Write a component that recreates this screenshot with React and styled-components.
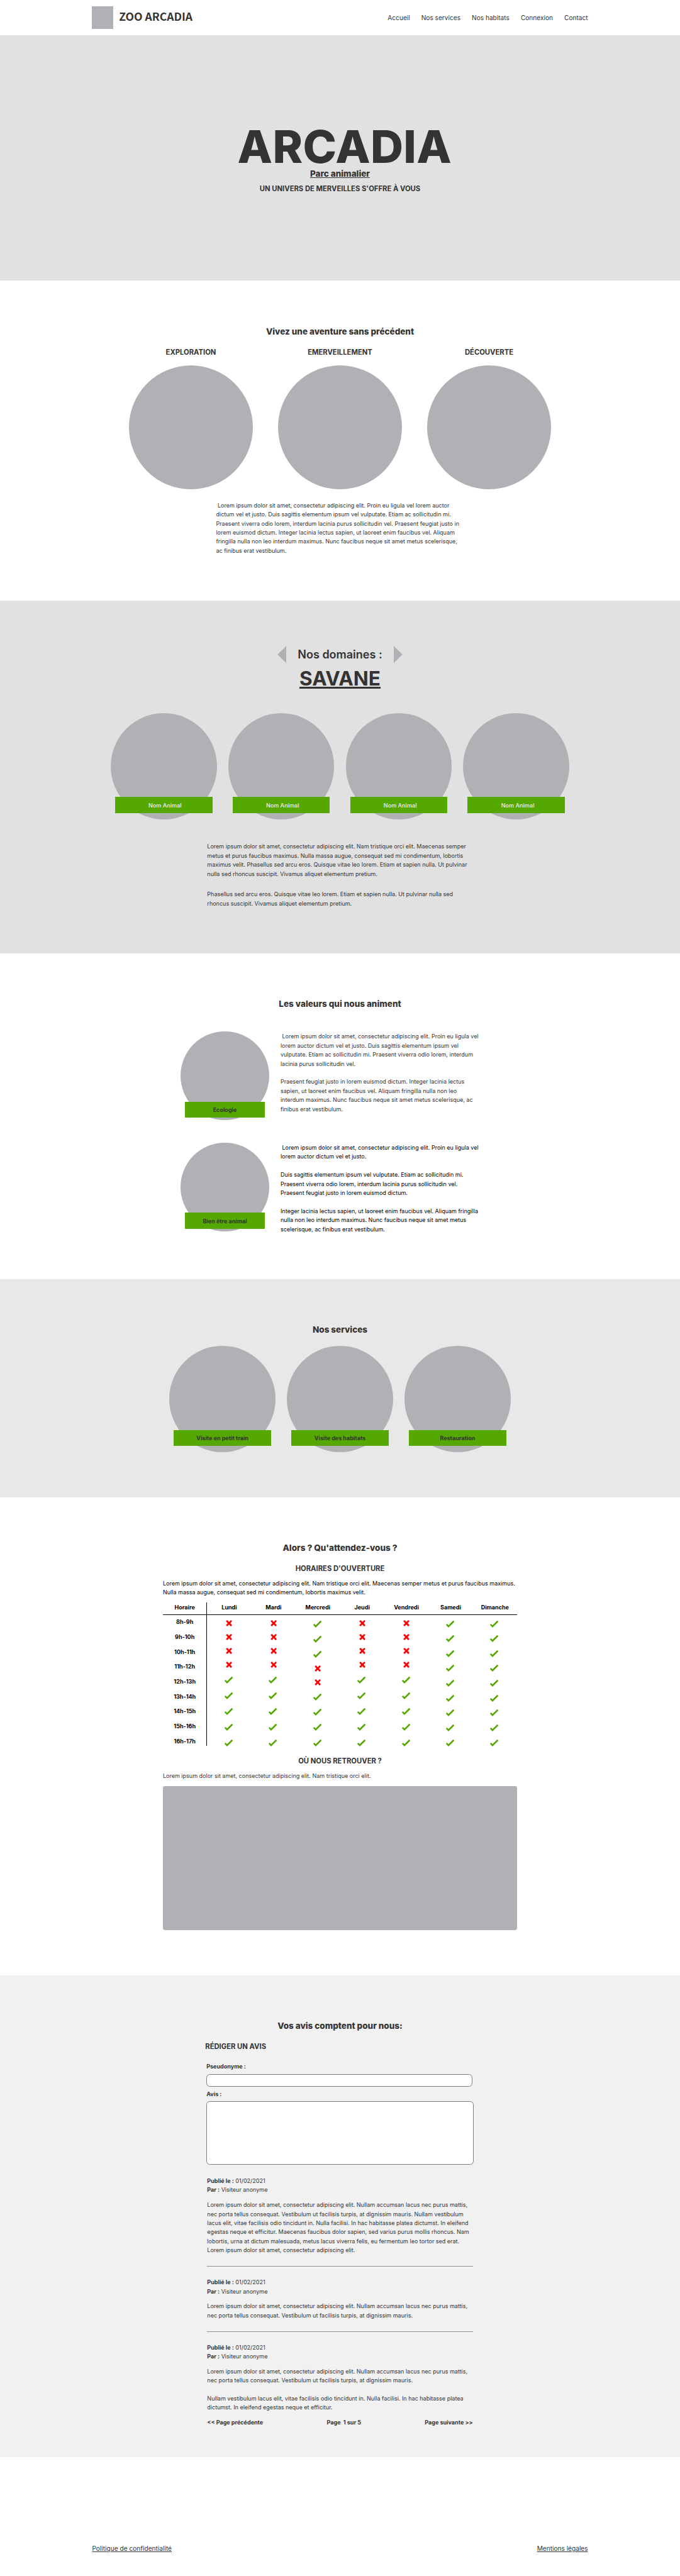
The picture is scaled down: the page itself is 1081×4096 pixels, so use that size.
import React from "react";
import styled, { createGlobalStyle } from "styled-components";

const ink = "#333333";
const grey = "#b0b1b5";
const green = "#54a800";

/* 1rem = 10 design pixels of the 1920px wide layout */
const GlobalStyle = createGlobalStyle`
  *, *::before, *::after { box-sizing: border-box; margin: 0; padding: 0; }
  html { font-size: 5.63021px; }
  body {
    background: #ffffff;
    color: ${ink};
    font-family: Inter, "Liberation Sans", sans-serif;
    font-size: 1.6rem;
    line-height: 1.6;
  }
`;

const Page = styled.div`
  width: 192rem;
  max-width: 100%;
  overflow: hidden;
`;

const Header = styled.header`
  display: flex;
  justify-content: space-between;
  align-items: center;
  height: 10rem;
  padding: 0 26rem;
`;

const Brand = styled.div`
  display: flex;
  align-items: center;
  gap: 1.6rem;
`;

const Logo = styled.div`
  width: 6rem;
  height: 6.5rem;
  background: ${grey};
`;

const BrandName = styled.span`
  padding-bottom: 0.72rem;
  font-family: "Noto Sans CJK JP", "Noto Sans", sans-serif;
  font-size: 3.12rem;
  font-weight: 700;
  line-height: 1;
`;

const Nav = styled.nav`
  display: flex;
  gap: 3.2rem;
  font-size: 1.8rem;
`;

const NavLink = styled.a`
  color: inherit;
  text-decoration: none;
`;

const Hero = styled.section`
  display: flex;
  flex-direction: column;
  align-items: center;
  height: 69.3rem;
  padding-top: 25.27rem;
  background: #e1e1e1;
`;

const HeroTitle = styled.h1`
  margin-left: 2.6rem;
  font-size: 12.8rem;
  font-weight: 800;
  letter-spacing: 0.06rem;
  line-height: 12rem;
`;

const HeroSubtitle = styled.p`
  margin-top: 0.1rem;
  font-size: 2.4rem;
  font-weight: 800;
  line-height: 3.2rem;
  text-decoration: underline;
`;

const HeroTagline = styled.p`
  margin-top: 1.1rem;
  font-size: 2rem;
  font-weight: 700;
  line-height: 3.2rem;
  text-transform: uppercase;
`;

const Section = styled.section`
  display: flex;
  flex-direction: column;
  align-items: center;
  height: ${(p) => p.$height}rem;
  padding-top: 12.47rem;
  background: ${(p) => p.$background || "#ffffff"};
`;

const Title = styled.h2`
  font-size: 2.4rem;
  font-weight: 800;
  line-height: 3.84rem;
`;

const Subtitle = styled.h3`
  align-self: ${(p) => (p.$start ? "flex-start" : "center")};
  margin-top: ${(p) => p.$top || 0}rem;
  margin-left: ${(p) => (p.$start ? "-0.35rem" : 0)};
  font-size: 2rem;
  font-weight: 700;
  line-height: 3.2rem;
  text-transform: uppercase;
`;

const Row = styled.div`
  display: flex;
  gap: ${(p) => p.$gap}rem;
  margin-top: ${(p) => p.$top}rem;
`;

const Feature = styled.div`
  display: flex;
  flex-direction: column;
  align-items: center;
  gap: 2.2rem;
`;

const Circle = styled.div`
  position: relative;
  flex: none;
  width: ${(p) => p.$size}rem;
  height: ${(p) => p.$size}rem;
  border-radius: 50%;
  background: ${grey};
`;

const Banner = styled.div`
  position: absolute;
  top: ${(p) => p.$top}rem;
  right: 1.25rem;
  left: 1.25rem;
  display: flex;
  align-items: center;
  justify-content: center;
  height: 4.5rem;
  padding-top: ${(p) => p.$pad || 0}rem;
  background: ${green};
  color: ${(p) => (p.$light ? "#e1e1e1" : ink)};
  font-weight: ${(p) => (p.$light ? 600 : 700)};
  white-space: pre;
`;

const Text = styled.div`
  display: flex;
  flex: none;
  flex-direction: column;
  gap: ${(p) => p.$gap || 2.56}rem;
  width: ${(p) => p.$width}rem;
  margin-top: ${(p) => p.$top || 0}rem;
  color: ${(p) => (p.$black ? "#000000" : ink)};
`;

const DomainHead = styled.div`
  display: flex;
  align-items: center;
  gap: 3.2rem;
  height: 5rem;
  margin-top: 0.28rem;
`;

const DomainLabel = styled.h2`
  padding-top: 0.22rem;
  font-size: 3.2rem;
  font-weight: 600;
  line-height: 5rem;
`;

const Arrow = styled.button`
  width: 2.5rem;
  height: 5rem;
  border: 0;
  background: ${grey};
  clip-path: ${(p) =>
    p.$left ? "polygon(100% 0, 100% 100%, 0 50%)" : "polygon(0 0, 100% 50%, 0 100%)"};
`;

const DomainName = styled.h3`
  margin-top: 1.13rem;
  font-size: 5.6rem;
  font-weight: 700;
  line-height: 6.4rem;
  text-decoration: underline;
`;

const Values = styled.div`
  display: flex;
  flex-direction: column;
  gap: 6.4rem;
  width: 90rem;
  margin-top: 5.85rem;
`;

const Value = styled.article`
  display: flex;
  gap: 3.2rem;
  height: 25rem;
`;

const Schedule = styled.div`
  display: flex;
  width: 100rem;
  margin-top: 1.51rem;
  color: #000000;
  font-weight: 700;
`;

const Column = styled.div`
  width: 12.5rem;
  text-align: center;
`;

const HourColumn = styled(Column)`
  align-self: flex-start;
  border-right: 0.2rem solid #000000;
`;

const ColumnHead = styled.div`
  height: 3.6rem;
  padding-top: 0.14rem;
  border-bottom: 0.2rem solid #000000;
`;

const HourHead = styled(ColumnHead)`
  margin-right: -0.2rem;
  padding-right: 0.2rem;
`;

const Hours = styled.div`
  display: flex;
  flex-direction: column;
  justify-content: space-between;
  height: 36.9rem;
  padding-top: 0.72rem;
`;

const Slots = styled.div`
  display: flex;
  flex-direction: column;
  align-items: center;
  justify-content: space-between;
  height: 37.5rem;
  padding-top: 0.91rem;
`;

const CheckSvg = styled.svg`
  flex: none;
  width: 3rem;
  height: 3rem;
  fill: ${green};
`;

const CrossSvg = styled.svg`
  flex: none;
  width: 2.52rem;
  height: 2.52rem;
  fill: #ff0000;
`;

const MapBox = styled.div`
  width: 100rem;
  height: 40.7rem;
  margin-top: 1.49rem;
  border-radius: 0.6rem;
  background: ${grey};
`;

const Reviews = styled.div`
  display: flex;
  flex-direction: column;
  width: 75.4rem;
  margin-top: 2.17rem;
`;

const Label = styled.label`
  margin-top: ${(p) => p.$top}rem;
  font-weight: 700;
`;

const Input = styled.input`
  width: 75rem;
  height: 3.5rem;
  margin-top: 0.78rem;
  border: 1px solid #7c7c7c;
  border-radius: 1rem;
  background: #ffffff;
`;

const Area = styled.textarea`
  display: block;
  width: 75.4rem;
  height: 17.85rem;
  margin-top: 0.72rem;
  border: 1px solid #7c7c7c;
  border-radius: 1rem;
  background: #ffffff;
  resize: none;
`;

const ReviewList = styled.div`
  width: 75rem;
  margin: 3.4rem 0 0 0.2rem;
`;

const Review = styled.article`
  & + & {
    margin-top: 3.11rem;
    padding-top: 3.18rem;
    border-top: 0.2rem solid #909090;
  }
`;

const Pagination = styled.div`
  display: flex;
  justify-content: space-between;
  margin-top: 1.62rem;
  font-weight: 700;
  white-space: pre;
`;

const Footer = styled.footer`
  display: flex;
  justify-content: space-between;
  height: 33.5rem;
  padding: 24.3rem 26rem 0;
  font-size: 1.8rem;
`;

const FooterLink = styled.a`
  text-decoration: underline;
`;

const Check = () => (
  <CheckSvg viewBox="0 0 30 30">
    <path d="M1.5 17.3 4.6 14 8.9 18.1 22.1 5 25.4 8.3 8.8 25Z" />
  </CheckSvg>
);

const Cross = () => (
  <CrossSvg viewBox="0 0 25.2 25.2">
    <path d="M3.8 7 7.4 3.5 12.6 8.9 17.8 3.5 21.3 6.8 16.1 12.5 21.3 17.9 17.8 21.7 12.6 16.2 7.4 21.5 3.8 17.9 9 12.4Z" />
  </CrossSvg>
);

const nav = ["Accueil", "Nos services", "Nos habitats", "Connexion", "Contact"];
const features = ["Exploration", "Emerveillement", "Découverte"];
const services = ["Visite en petit train", "Visite des habitats", "Restauration"];
const hours = ["8h-9h", "9h-10h", "10h-11h", "11h-12h", "12h-13h", "13h-14h", "14h-15h", "15h-16h", "16h-17h"];

/* one letter per hour: v = open, x = closed */
const days = [
  ["Lundi", "xxxxvvvvv"],
  ["Mardi", "xxxxvvvvv"],
  ["Mercredi", "vvvxxvvvv"],
  ["Jeudi", "xxxxvvvvv"],
  ["Vendredi", "xxxxvvvvv"],
  ["Samedi", "vvvvvvvvv"],
  ["Dimanche", "vvvvvvvvv"],
];

const shortReview =
  "Lorem ipsum dolor sit amet, consectetur adipiscing elit. Nullam accumsan lacus nec purus mattis, nec porta tellus consequat. Vestibulum ut facilisis turpis, at dignissim mauris.";

const reviews = [
  [
    shortReview +
      " Nullam vestibulum lacus elit, vitae facilisis odio tincidunt in. Nulla facilisi. In hac habitasse platea dictumst. In eleifend egestas neque et efficitur. Maecenas faucibus dolor sapien, sed varius purus mollis rhoncus. Nam lobortis, urna at dictum malesuada, metus lacus viverra felis, eu fermentum leo tortor sed erat. Lorem ipsum dolor sit amet, consectetur adipiscing elit.",
  ],
  [shortReview],
  [
    shortReview,
    "Nullam vestibulum lacus elit, vitae facilisis odio tincidunt in. Nulla facilisi. In hac habitasse platea dictumst. In eleifend egestas neque et efficitur.",
  ],
];

export default function App() {
  return (
    <Page>
      <GlobalStyle />
      <Header>
        <Brand>
          <Logo />
          <BrandName>ZOO ARCADIA</BrandName>
        </Brand>
        <Nav>
          {nav.map((item) => (
            <NavLink key={item}>{item}</NavLink>
          ))}
        </Nav>
      </Header>

      <Hero>
        <HeroTitle>ARCADIA</HeroTitle>
        <HeroSubtitle>Parc animalier</HeroSubtitle>
        <HeroTagline>Un univers de merveilles s'offre à vous</HeroTagline>
      </Hero>

      <Section $height={90.3}>
        <Title>Vivez une aventure sans précédent</Title>
        <Row $gap={7.1} $top={2.18}>
          {features.map((name) => (
            <Feature key={name}>
              <Subtitle>{name}</Subtitle>
              <Circle $size={35} />
            </Feature>
          ))}
        </Row>
        <Text $width={70} $top={3.32}>
          <p>
            &nbsp;Lorem ipsum dolor sit amet, consectetur adipiscing elit. Proin eu ligula vel lorem auctor dictum vel et
            justo. Duis sagittis elementum ipsum vel vulputate. Etiam ac sollicitudin mi. Praesent viverra odio lorem,
            interdum lacinia purus sollicitudin vel. Praesent feugiat justo in lorem euismod dictum. Integer lacinia
            lectus sapien, ut laoreet enim faucibus vel. Aliquam fringilla nulla non leo interdum maximus. Nunc faucibus
            neque sit amet metus scelerisque, ac finibus erat vestibulum.
          </p>
        </Text>
      </Section>

      <Section $height={99.6} $background="#e1e1e1">
        <DomainHead>
          <Arrow $left aria-label="Domaine précédent" />
          <DomainLabel>Nos domaines :</DomainLabel>
          <Arrow aria-label="Domaine suivant" />
        </DomainHead>
        <DomainName>SAVANE</DomainName>
        <Row $gap={3.2} $top={6.5}>
          {[0, 1, 2, 3].map((n) => (
            <Circle key={n} $size={30}>
              <Banner $light $top={23.74} $pad={0.24}>
                {"  Nom Animal"}
              </Banner>
            </Circle>
          ))}
        </Row>
        <Text $width={75} $top={6.54} $gap={3.2}>
          <p>
            Lorem ipsum dolor sit amet, consectetur adipiscing elit. Nam tristique orci elit. Maecenas semper metus et
            purus faucibus maximus. Nulla massa augue, consequat sed mi condimentum, lobortis maximus velit. Phasellus
            sed arcu eros. Quisque vitae leo lorem. Etiam et sapien nulla. Ut pulvinar nulla sed rhoncus suscipit.
            Vivamus aliquet elementum pretium.
          </p>
          <p>
            Phasellus sed arcu eros. Quisque vitae leo lorem. Etiam et sapien nulla. Ut pulvinar nulla sed rhoncus
            suscipit. Vivamus aliquet elementum pretium.
          </p>
        </Text>
      </Section>

      <Section $height={92}>
        <Title>Les valeurs qui nous animent</Title>
        <Values>
          <Value>
            <Circle $size={25}>
              <Banner $top={19.75} $pad={0.5}>
                Ecologie
              </Banner>
            </Circle>
            <Text $width={56} $top={0.16}>
              <p>
                &nbsp;Lorem ipsum dolor sit amet, consectetur adipiscing elit. Proin eu ligula vel lorem auctor dictum
                vel et justo. Duis sagittis elementum ipsum vel vulputate. Etiam ac sollicitudin mi. Praesent viverra
                odio lorem, interdum lacinia purus sollicitudin vel.
              </p>
              <p>
                Praesent feugiat justo in lorem euismod dictum. Integer lacinia lectus sapien, ut laoreet enim faucibus
                vel. Aliquam fringilla nulla non leo interdum maximus. Nunc faucibus neque sit amet metus scelerisque,
                ac finibus erat vestibulum.
              </p>
            </Text>
          </Value>
          <Value>
            <Circle $size={25}>
              <Banner $top={19.75} $pad={0.5}>
                Bien être animal
              </Banner>
            </Circle>
            <Text $width={56} $top={0.16} $black>
              <p>
                &nbsp;Lorem ipsum dolor sit amet, consectetur adipiscing elit. Proin eu ligula vel lorem auctor dictum
                vel et justo.
              </p>
              <p>
                Duis sagittis elementum ipsum vel vulputate. Etiam ac sollicitudin mi. Praesent viverra odio lorem,
                interdum lacinia purus sollicitudin vel. Praesent feugiat justo in lorem euismod dictum.
              </p>
              <p>
                Integer lacinia lectus sapien, ut laoreet enim faucibus vel. Aliquam fringilla nulla non leo interdum
                maximus. Nunc faucibus neque sit amet metus scelerisque, ac finibus erat vestibulum.
              </p>
            </Text>
          </Value>
        </Values>
      </Section>

      <Section $height={61.65} $background="#e8e8e8">
        <Title>Nos services</Title>
        <Row $gap={3.2} $top={2.64}>
          {services.map((name) => (
            <Circle key={name} $size={30}>
              <Banner $top={23.74} $pad={0.08}>
                {name}
              </Banner>
            </Circle>
          ))}
        </Row>
      </Section>

      <Section $height={135.02}>
        <Title>Alors ? Qu'attendez-vous ?</Title>
        <Subtitle $top={2.25}>Horaires d'ouverture</Subtitle>
        <Text $width={100} $top={1.35} $black>
          <p>
            Lorem ipsum dolor sit amet, consectetur adipiscing elit. Nam tristique orci elit. Maecenas semper metus et
            purus faucibus maximus. Nulla massa augue, consequat sed mi condimentum, lobortis maximus velit.
          </p>
        </Text>
        <Schedule>
          <HourColumn>
            <HourHead>Horaire</HourHead>
            <Hours>
              {hours.map((hour) => (
                <span key={hour}>{hour}</span>
              ))}
            </Hours>
          </HourColumn>
          {days.map(([day, slots]) => (
            <Column key={day}>
              <ColumnHead>{day}</ColumnHead>
              <Slots>{slots.split("").map((s, i) => (s === "v" ? <Check key={i} /> : <Cross key={i} />))}</Slots>
            </Column>
          ))}
        </Schedule>
        <Subtitle $top={2.08}>Où nous retrouver ?</Subtitle>
        <Text $width={100} $top={1.36}>
          <p>Lorem ipsum dolor sit amet, consectetur adipiscing elit. Nam tristique orci elit.</p>
        </Text>
        <MapBox />
      </Section>

      <Section $height={136.13} $background="#f1f1f1">
        <Title>Vos avis comptent pour nous:</Title>
        <Reviews>
          <Subtitle $start>Rédiger un avis</Subtitle>
          <Label $top={2.91} htmlFor="pseudo">
            Pseudonyme :
          </Label>
          <Input id="pseudo" />
          <Label $top={0.91} htmlFor="avis">
            Avis :
          </Label>
          <Area id="avis" />
          <ReviewList>
            {reviews.map((paragraphs, i) => (
              <Review key={i}>
                <p>
                  <b>Publié le :</b> 01/02/2021
                </p>
                <p>
                  <b>Par :</b> Visiteur anonyme
                </p>
                <Text $width={75} $top={1.66}>
                  {paragraphs.map((text, j) => (
                    <p key={j}>{text}</p>
                  ))}
                </Text>
              </Review>
            ))}
            <Pagination>
              <span>{"<< Page précédente"}</span>
              <span>{"Page  1 sur 5"}</span>
              <span>{"Page suivante >>"}</span>
            </Pagination>
          </ReviewList>
        </Reviews>
      </Section>

      <Footer>
        <FooterLink>Politique de confidentialité</FooterLink>
        <FooterLink>Mentions légales</FooterLink>
      </Footer>
    </Page>
  );
}
